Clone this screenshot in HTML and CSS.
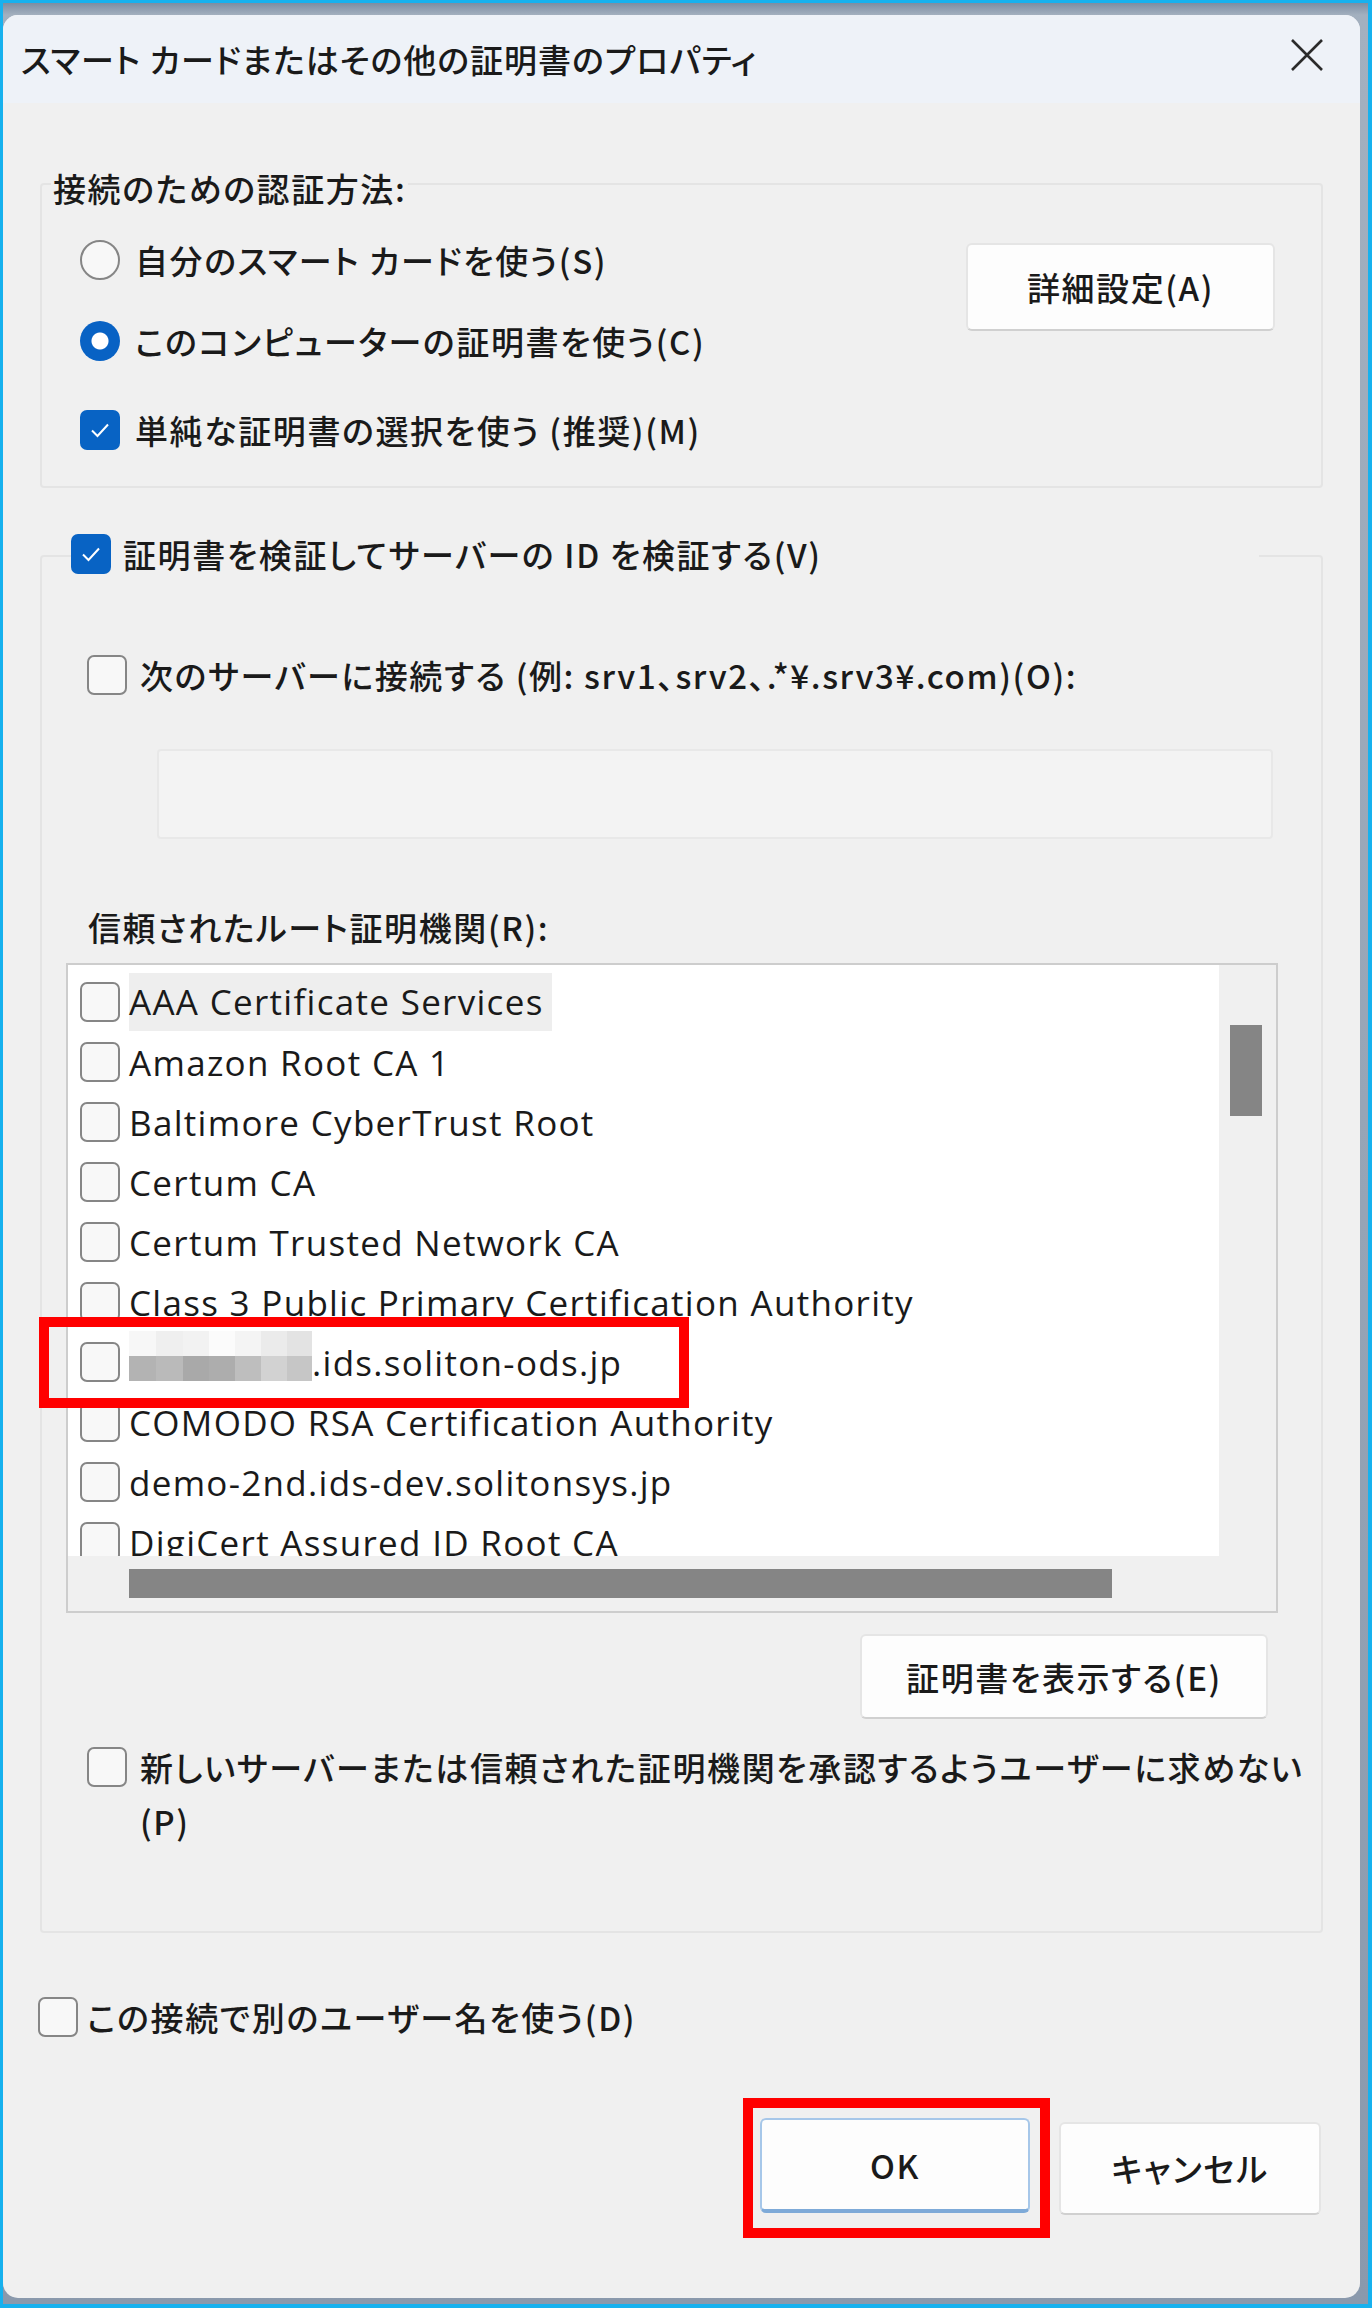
FILE: index.html
```html
<!DOCTYPE html>
<html lang="ja">
<head>
  <meta charset="UTF-8">
  <meta name="viewport" content="width=device-width, initial-scale=1.0">
  <title>スマート カードまたはその他の証明書のプロパティ</title>
  <link rel="stylesheet" href="styles.css">
</head>
<body>
  <div class="screen">
    <div class="backdrop">
      <div class="window">
        <div class="titlebar">
          <div class="title">スマート カードまたはその他の証明書のプロパティ</div>
          <svg class="close" viewBox="0 0 38 38">
            <path d="M4 4 L34 34 M34 4 L4 34" stroke="#2b2b2b" stroke-width="2.6" fill="none"/>
          </svg>
        </div>

        <div class="content">
          <!-- 認証方法 -->
          <div class="group auth">
            <div class="group-title">接続のための認証方法:</div>
            <div class="auth-body">
              <div class="options">
                <div class="opt"><span class="radio"></span>自分のスマート カードを使う(S)</div>
                <div class="opt"><span class="radio on"></span>このコンピューターの証明書を使う(C)</div>
                <div class="opt far">
                  <span class="check on"><svg viewBox="0 0 26 26"><path d="M5 13.5 L10.5 19 L21 7.5" stroke="#fff" stroke-width="2" fill="none"/></svg></span>
                  単純な証明書の選択を使う (推奨)(M)
                </div>
              </div>
              <button class="btn btn-adv">詳細設定(A)</button>
            </div>
          </div>

          <!-- サーバー検証 -->
          <div class="group verify">
            <div class="group-head">
              <span class="check on"><svg viewBox="0 0 26 26"><path d="M5 13.5 L10.5 19 L21 7.5" stroke="#fff" stroke-width="2" fill="none"/></svg></span>
              証明書を検証してサーバーの ID を検証する(V)
            </div>
            <div class="opt connect"><span class="check"></span>次のサーバーに接続する (例: srv1、srv2、.*¥.srv3¥.com)(O):</div>
            <div class="textbox"></div>

            <div class="list-label">信頼されたルート証明機関(R):</div>
            <div class="listbox">
              <div class="list-rows">
                <div class="item"><span class="check"></span><span class="focus">AAA Certificate Services</span></div>
                <div class="item"><span class="check"></span>Amazon Root CA 1</div>
                <div class="item"><span class="check"></span>Baltimore CyberTrust Root</div>
                <div class="item"><span class="check"></span>Certum CA</div>
                <div class="item"><span class="check"></span>Certum Trusted Network CA</div>
                <div class="item"><span class="check"></span>Class 3 Public Primary Certification Authority</div>
                <div class="item"><span class="check"></span><span class="host"><span class="redact"></span>.ids.soliton-ods.jp</span></div>
                <div class="item"><span class="check"></span>COMODO RSA Certification Authority</div>
                <div class="item"><span class="check"></span>demo-2nd.ids-dev.solitonsys.jp</div>
                <div class="item"><span class="check"></span>DigiCert Assured ID Root CA</div>
              </div>
              <div class="vbar"><div class="thumb"></div></div>
              <div class="hbar"><div class="thumb"></div></div>
              <div class="corner"></div>
              <div class="mark"></div>
            </div>
            <div class="list-actions">
              <button class="btn btn-view">証明書を表示する(E)</button>
            </div>

            <div class="opt prompt">
              <span class="check"></span>
              <span>新しいサーバーまたは信頼された証明機関を承認するようユーザーに求めない<br>(P)</span>
            </div>
          </div>

          <div class="opt other-user"><span class="check"></span>この接続で別のユーザー名を使う(D)</div>

          <div class="footer">
            <div class="callout">
              <button class="btn btn-ok">OK</button>
            </div>
            <button class="btn btn-cancel">キャンセル</button>
          </div>
        </div>
      </div>
    </div>
  </div>
</body>
</html>
```

FILE: styles.css
```css
* {
  margin: 0;
  padding: 0;
  box-sizing: border-box;
}
body {
  font-family: "Noto Sans CJK JP", "Noto Sans", sans-serif;
  font-size: 33px;
  font-weight: 500;
  font-feature-settings: "palt";
  letter-spacing: 1.6px;
  color: #1a1a1a;
  background-color: #17b1ee;
}
.screen {
  height: 2308px;
  padding: 3px 4px 4px 3px;
  display: flex;
}
.backdrop {
  flex: 1;
  display: flex;
  padding: 12px 8px 6px 0;
  background: linear-gradient(to bottom, #7c8da2, #a3b0bf 12px, #8a99ac);
}
.window {
  flex: 1;
  display: flex;
  flex-direction: column;
  background-color: #f0f0f0;
  border-radius: 15px;
  overflow: hidden;
}

/* title bar */
.titlebar {
  height: 88px;
  display: flex;
  align-items: center;
  justify-content: space-between;
  padding: 0 34px 0 18px;
  background-color: #eef2f8;
}
.title {
  letter-spacing: 1px;
}
.close {
  width: 38px;
  height: 38px;
  margin-bottom: 8px;
}

.content {
  padding: 80px 37px 0 37px;
}

/* group boxes */
.group {
  border: 2px solid #e4e4e4;
  border-radius: 4px;
}
.group-title {
  width: fit-content;
  margin: -17px 0 0 9px;
  padding: 0 2px;
  line-height: 40px;
  background-color: #f0f0f0;
}
.auth-body {
  display: flex;
  justify-content: space-between;
  align-items: flex-start;
  padding: 28px 46px 32px 38px;
}
.opt {
  display: flex;
  align-items: center;
  gap: 15px;
  height: 48px;
  white-space: nowrap;
}
.auth .opt + .opt {
  margin-top: 33px;
}
.auth .opt.far {
  margin-top: 41px;
}

/* radio / checkbox */
.radio {
  width: 40px;
  height: 40px;
  flex-shrink: 0;
  border-radius: 50%;
  border: 2.5px solid #868686;
  background-color: #f8f8f8;
}
.radio.on {
  border: none;
  background: radial-gradient(circle, #fff 0 8px, #0862c4 9px);
}
.check {
  width: 40px;
  height: 40px;
  flex-shrink: 0;
  display: flex;
  align-items: center;
  justify-content: center;
  border-radius: 7px;
  border: 2.5px solid #868686;
  background-color: #f8f8f8;
}
.check.on {
  border: none;
  background-color: #0863c4;
}
.check svg {
  width: 26px;
  height: 26px;
}

/* buttons */
.btn {
  font: inherit;
  letter-spacing: inherit;
  color: inherit;
  background-color: #fdfdfd;
  border: 2px solid #e5e5e5;
  border-bottom-color: #d0d0d0;
  border-radius: 6px;
}
.btn-adv {
  width: 309px;
  height: 88px;
  margin-top: 7px;
}

/* verify group */
.verify {
  margin-top: 67px;
  padding-bottom: 83px;
}
.group-head {
  display: flex;
  align-items: center;
  gap: 12px;
  height: 48px;
  margin: -27px 62px 0 29px;
  background-color: #f0f0f0;
  white-space: nowrap;
}
.connect {
  margin: 73px 0 0 45px;
  gap: 13px;
}
.textbox {
  height: 90px;
  margin: 50px 48px 0 115px;
  border: 2px solid #e8e8e8;
  border-radius: 4px;
  background-color: #f3f3f3;
}
.list-label {
  margin: 64px 0 0 46px;
  line-height: 48px;
}

/* list box */
.listbox {
  position: relative;
  display: grid;
  grid-template-columns: 1fr 57px;
  grid-template-rows: 591px 55px;
  margin: 12px 43px 0 24px;
  border: 2px solid #cdcdcd;
}
.list-rows {
  overflow: hidden;
  background-color: #fff;
  padding: 7px 0 0 12px;
}
.item {
  display: flex;
  align-items: center;
  gap: 9px;
  height: 60px;
  white-space: nowrap;
  font-family: "Open Sans", "Noto Sans", sans-serif;
  font-size: 35px;
  font-weight: 400;
  letter-spacing: 1.3px;
}
.focus {
  background-color: #eeeeee;
  line-height: 58px;
  padding-right: 8px;
}
.host {
  display: flex;
  align-items: center;
}
.redact {
  width: 183px;
  height: 50px;
  margin-top: -12px;
  background:
    linear-gradient(to right, #f7f7f7 0 27px, #efefef 27px 54px, #f2f2f2 54px 80px, #fbfbfb 80px 106px, #f4f4f4 106px 132px, #ebebeb 132px 158px, #e3e3e3 158px) top / 100% 50% no-repeat,
    linear-gradient(to right, #b3b3b3 0 27px, #bababa 27px 54px, #a9a9a9 54px 80px, #adadad 80px 106px, #bebebe 106px 132px, #d2d2d2 132px 158px, #c6c6c6 158px) bottom / 100% 50% no-repeat;
}
.vbar,
.hbar,
.corner {
  background-color: #f0f0f0;
}
.vbar .thumb {
  width: 32px;
  height: 91px;
  margin: 60px 0 0 11px;
  background-color: #858585;
}
.hbar .thumb {
  width: 983px;
  height: 29px;
  margin: 13px 0 0 61px;
  background-color: #858585;
}

/* red highlight over the list row */
.mark {
  position: absolute;
  left: -29px;
  top: 352px;
  width: 650px;
  height: 91px;
  border: 10px solid #ff0000;
}

.list-actions {
  display: flex;
  justify-content: flex-end;
  padding-right: 53px;
  margin-top: 21px;
}
.btn-view {
  width: 408px;
  height: 85px;
}
.prompt {
  height: auto;
  align-items: flex-start;
  margin: 21px 0 0 45px;
  gap: 13px;
  line-height: 54px;
}
.prompt .check {
  margin-top: 7px;
}

.other-user {
  margin: 60px 0 0 -2px;
  gap: 9px;
}

/* dialog buttons */
.footer {
  display: flex;
  justify-content: flex-end;
  align-items: center;
  gap: 9px;
  margin-top: 57px;
  padding-right: 2px;
}
.callout {
  border: 10px solid #ff0000;
  padding: 10px 10px 15px 7px;
}
.btn-ok {
  display: block;
  width: 270px;
  height: 95px;
  border: 2px solid #a6c7e9;
  border-bottom: 4px solid #7eaad8;
}
.btn-cancel {
  width: 262px;
  height: 93px;
}
```
